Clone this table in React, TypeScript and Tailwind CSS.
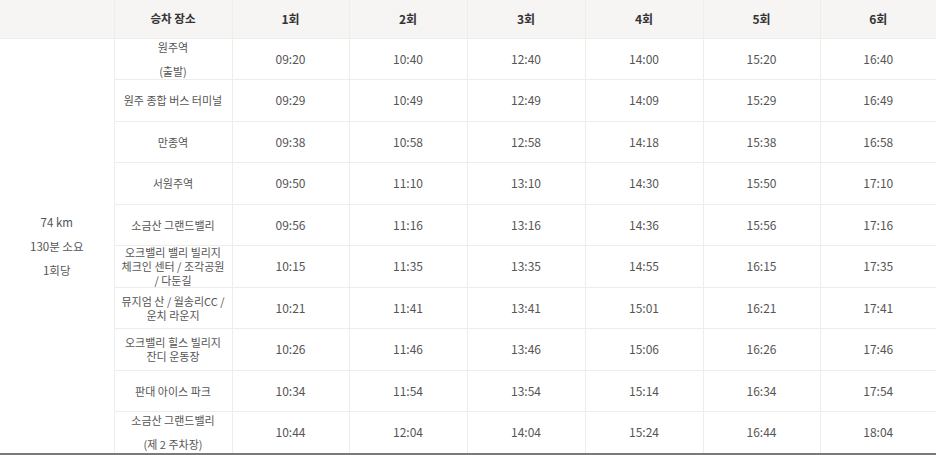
import React from 'react';

type Stop = { lines: string[]; spaced?: boolean; times: string[] };

const stops: Stop[] = [
  { lines: ['원주역', '(출발)'], spaced: true, times: ['09:20', '10:40', '12:40', '14:00', '15:20', '16:40'] },
  { lines: ['원주 종합 버스 터미널'], times: ['09:29', '10:49', '12:49', '14:09', '15:29', '16:49'] },
  { lines: ['만종역'], times: ['09:38', '10:58', '12:58', '14:18', '15:38', '16:58'] },
  { lines: ['서원주역'], times: ['09:50', '11:10', '13:10', '14:30', '15:50', '17:10'] },
  { lines: ['소금산 그랜드밸리'], times: ['09:56', '11:16', '13:16', '14:36', '15:56', '17:16'] },
  {
    lines: ['오크밸리 밸리 빌리지', '체크인 센터 / 조각공원', '/ 다둔길'],
    times: ['10:15', '11:35', '13:35', '14:55', '16:15', '17:35'],
  },
  { lines: ['뮤지엄 산 / 월송리CC /', '운치 라운지'], times: ['10:21', '11:41', '13:41', '15:01', '16:21', '17:41'] },
  { lines: ['오크밸리 힐스 빌리지', '잔디 운동장'], times: ['10:26', '11:46', '13:46', '15:06', '16:26', '17:46'] },
  { lines: ['판대 아이스 파크'], times: ['10:34', '11:54', '13:54', '15:14', '16:34', '17:54'] },
  {
    lines: ['소금산 그랜드밸리', '(제 2 주차장)'],
    spaced: true,
    times: ['10:44', '12:04', '14:04', '15:24', '16:44', '18:04'],
  },
];

const rounds = ['1회', '2회', '3회', '4회', '5회', '6회'];

const cell = 'border border-[#ededeb] text-center align-middle p-0';

export default function App() {
  return (
    <div
      className="w-[936px] h-[455px] overflow-hidden bg-white text-[12px] text-[#555]"
      style={{ fontFamily: '"Noto Sans CJK KR", "Noto Sans", sans-serif' }}
    >
      <table className="w-full table-fixed border-collapse border-b-2 border-b-[#7a7a7a]">
        <colgroup>
          <col className="w-[114px]" />
          <col className="w-[118px]" />
          <col className="w-[117px]" />
          <col className="w-[118px]" />
          <col className="w-[118px]" />
          <col className="w-[118px]" />
          <col className="w-[117px]" />
          <col className="w-[116px]" />
        </colgroup>
        <thead>
          <tr className="h-[38px] bg-[#f6f5f3] text-[#333] font-bold">
            <th className={`${cell} border-t-0 border-l-0`}></th>
            <th className={`${cell} border-t-0 text-[11.5px]`}>승차 장소</th>
            {rounds.map((r, j) => (
              <th key={r} className={`${cell} border-t-0 ${j === 5 ? 'border-r-0' : ''}`}>
                {r}
              </th>
            ))}
          </tr>
        </thead>
        <tbody>
          {stops.map((s, i) => (
            <tr key={i}>
              {i === 0 && (
                <td rowSpan={stops.length} className={`${cell} border-l-0 leading-[24px] text-[11.5px]`}>
                  <div>74 km</div>
                  <div>130분 소요</div>
                  <div>1회당</div>
                </td>
              )}
              <td className={cell}>
                <div
                  className={`h-[40.5px] flex flex-col justify-center items-center whitespace-nowrap text-[11px] ${
                    s.spaced ? 'leading-[24px]' : 'leading-[14px]'
                  }`}
                >
                  {s.lines.map((l) => (
                    <div key={l}>{l}</div>
                  ))}
                </div>
              </td>
              {s.times.map((t, j) => (
                <td key={j} className={`${cell} ${j === 5 ? 'border-r-0' : ''}`}>
                  {t}
                </td>
              ))}
            </tr>
          ))}
        </tbody>
      </table>
    </div>
  );
}
